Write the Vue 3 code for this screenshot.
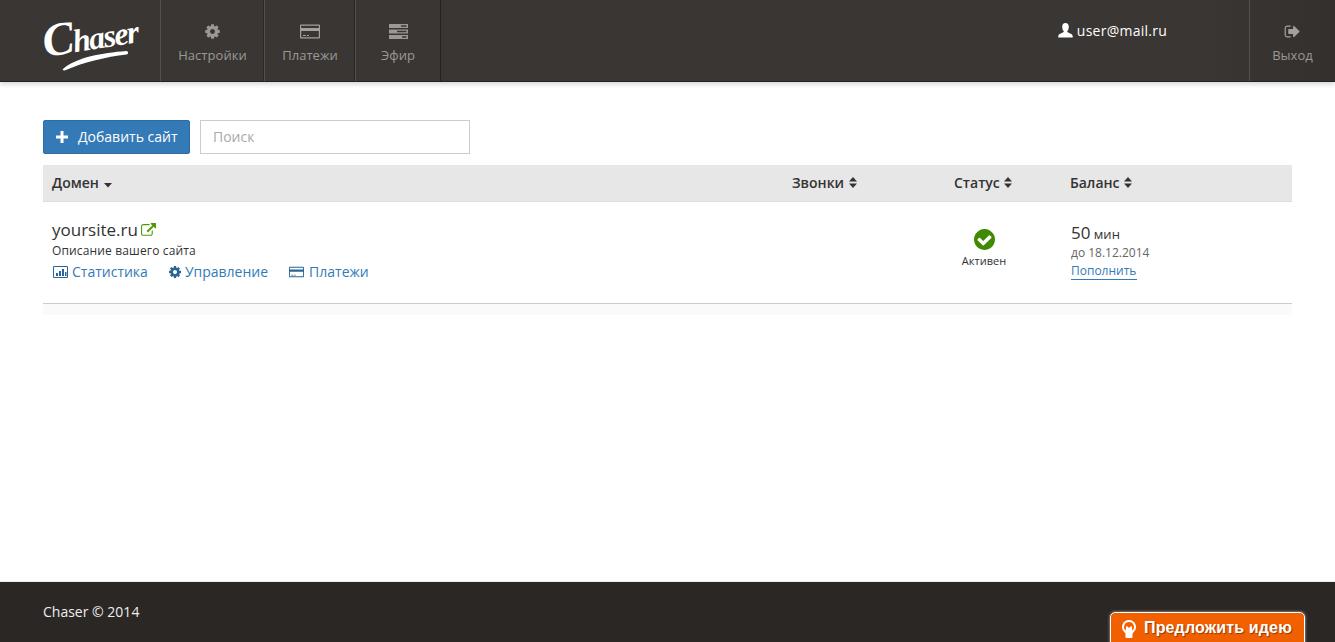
<script setup>
const gear = "M1152 896q0-106-75-181t-181-75-181 75-75 181 75 181 181 75 181-75 75-181zm512-109v222q0 12-8 23t-20 13l-185 28q-19 54-39 91 35 50 107 138 10 12 10 25t-9 23q-27 37-99 108t-94 71q-12 0-26-9l-138-108q-44 23-91 38-16 136-29 186-7 28-36 28h-222q-14 0-24.500-8.500t-11.500-21.500l-28-184q-49-16-90-37l-141 107q-10 9-25 9-14 0-25-11-126-114-165-168-7-10-7-23 0-12 8-23 15-21 51-66.500t54-70.500q-27-50-41-99l-183-27q-13-2-21-12.500t-8-23.500v-222q0-12 8-23t19-13l186-28q14-46 39-92-40-57-107-138-10-12-10-24 0-10 9-23 26-36 98.500-107.500t94.500-71.500q13 0 26 10l138 107q44-23 91-38 16-136 29-186 7-28 36-28h222q14 0 24.500 8.500t11.500 21.500l28 184q49 16 90 37l142-107q9-9 24-9 13 0 25 10 129 119 165 170 7 8 7 22 0 12-8 23-15 21-51 66.500t-54 70.500q26 50 41 98l183 28q13 2 21 12.500t8 23.500z"
const check = "M1412 734q0-28-18-46l-91-90q-19-19-45-19t-45 19l-408 407-226-226q-19-19-45-19t-45 19l-91 90q-18 18-18 46 0 27 18 45l362 362q19 19 45 19 27 0 46-19l543-543q18-18 18-45zm252 162q0 209-103 385.500t-279.500 279.500-385.500 103-385.500-103-279.500-279.500-103-385.500 103-385.500 279.500-279.500 385.500-103 385.500 103 279.500 279.500 103 385.500z"
const signout = "M704 1440q0 4 1 20t.5 26.500-3 23.500-10 19.500-20.500 6.500h-320q-119 0-203.500-84.500t-84.500-203.500v-704q0-119 84.500-203.500t203.500-84.500h320q13 0 22.500 9.500t9.500 22.500q0 4 1 20t.5 26.500-3 23.500-10 19.500-20.500 6.500h-320q-66 0-113 47t-47 113v704q0 66 47 113t113 47h312l11.500 1 11.500 3 8 5.500 7 9 2 13.500zm928-544q0 26-19 45l-544 544q-19 19-45 19t-45-19-19-45v-288h-448q-26 0-45-19t-19-45v-384q0-26 19-45t45-19h448v-288q0-26 19-45t45-19 45 19l544 544q19 19 19 45z"
const external = "M1408 928v320q0 119-84.500 203.500t-203.500 84.500h-832q-119 0-203.500-84.500t-84.500-203.500v-832q0-119 84.500-203.500t203.500-84.500h704q14 0 23 9t9 23v64q0 14-9 23t-23 9h-704q-66 0-113 47t-47 113v832q0 66 47 113t113 47h832q66 0 113-47t47-113v-320q0-14 9-23t23-9h64q14 0 23 9t9 23zm384-864v512q0 26-19 45t-45 19-45-19l-176-176-652 652q-10 10-23 10t-23-10l-114-114q-10-10-10-23t10-23l652-652-176-176q-19-19-19-45t19-45 45-19h512q26 0 45 19t19 45z"
const card = "M1 1h18a1 1 0 0 1 1 1v12a1 1 0 0 1-1 1H1a1 1 0 0 1-1-1V2a1 1 0 0 1 1-1zm.2 1.200v2.300h17.600V2.200zm0 5.300v6.300h17.600V7.500zM3 11.500h3v1H3zm4 0h2v1H7z"
</script>

<template>
  <div class="page">
    <header class="top">
      <a class="logo">
        <svg class="logo-svg" width="110" height="60" viewBox="0 0 110 60">
          <text class="logo-text" transform="translate(3 42) rotate(-9)"><tspan class="logo-cap">C</tspan>haser</text>
          <path d="M21 54C35 42 60 38 84 36c2.500-.2 3 3 .5 3.500C64 42 42 47 24 55c-2 1-4 0-3-1z" fill="#fff" />
        </svg>
      </a>
      <nav class="nav">
        <a class="nav-item w-settings">
          <svg class="nav-ic" width="17" height="17" viewBox="0 0 1792 1792"><path :d="gear" fill="#9b9896" fill-rule="evenodd" /></svg>
          <span>Настройки</span>
        </a>
        <a class="nav-item w-pay">
          <svg class="nav-ic" width="20" height="16" viewBox="0 0 20 16"><path :d="card" fill="#a3a09e" fill-rule="evenodd" /></svg>
          <span>Платежи</span>
        </a>
        <a class="nav-item w-air">
          <svg class="nav-ic" width="19" height="15" viewBox="0 0 19 15">
            <path d="M0 0h19v4H0zM0 5.500h19v4H0zM0 11h19v4H0z" fill="#9b9896" />
            <path d="M12 1.200h5.500v1.600H12zM8 6.700h9.500v1.600H8zM13 12.200h4.500v1.600H13z" fill="#3a3633" />
          </svg>
          <span>Эфир</span>
        </a>
      </nav>
      <div class="user">
        <svg width="15" height="15" viewBox="0 0 15 15"><path d="M7.500 0C5.300 0 4.200 1.700 4.200 3.900c0 1.500.5 3 1.400 4 .3.400.2 1.100-.3 1.400C3.700 10.300.7 10.800.3 13c-.1.900 0 1.600 0 1.600h14.400s.1-.7 0-1.600c-.4-2.200-3.400-2.700-5-3.700-.5-.3-.6-1-.3-1.400.9-1 1.400-2.500 1.400-4C10.800 1.700 9.700 0 7.500 0z" fill="#fff" /></svg>
        <span>user@mail.ru</span>
      </div>
      <a class="nav-item w-exit">
        <svg class="nav-ic" width="17" height="17" viewBox="0 0 1792 1792"><path :d="signout" fill="#a3a09e" /></svg>
        <span>Выход</span>
      </a>
    </header>

    <main class="main">
      <div class="tools">
        <button class="add-btn">
          <svg width="12" height="12" viewBox="0 0 12 12"><path d="M4.500 0h3v4.500H12v3H7.500V12h-3V7.500H0v-3h4.500z" fill="#fff" /></svg>
          <span>Добавить сайт</span>
        </button>
        <input class="search" placeholder="Поиск" />
      </div>

      <div class="table">
        <div class="row head">
          <div class="h-cell">Домен
            <svg width="8" height="5" viewBox="0 0 8 5"><path d="M0 0h8L4 4.500z" fill="#333" /></svg>
          </div>
          <div class="h-cell">Звонки
            <svg width="8" height="11" viewBox="0 0 8 11"><path d="M0 4.500h8L4 0zM0 6.500h8L4 11z" fill="#333" /></svg>
          </div>
          <div class="h-cell">Статус
            <svg width="8" height="11" viewBox="0 0 8 11"><path d="M0 4.500h8L4 0zM0 6.500h8L4 11z" fill="#333" /></svg>
          </div>
          <div class="h-cell">Баланс
            <svg width="8" height="11" viewBox="0 0 8 11"><path d="M0 4.500h8L4 0zM0 6.500h8L4 11z" fill="#333" /></svg>
          </div>
        </div>

        <div class="row body">
          <div class="domain">
            <div class="site">
              <span>yoursite.ru</span>
              <svg width="15" height="15" viewBox="0 0 1792 1792"><path :d="external" fill="#4f9a00" /></svg>
            </div>
            <div class="desc">Описание вашего сайта</div>
            <div class="links">
              <a class="link">
                <svg width="15" height="12" viewBox="0 0 15 12">
                  <path d="M.5.500h14v11H.5z" fill="none" stroke="#2a6496" />
                  <path d="M3 7h2v3H3zM6 5h2v5H6zM9 3h2v7H9zM12 6h1.500v4H12z" fill="#2a6496" />
                </svg>
                <span>Статистика</span>
              </a>
              <a class="link">
                <svg width="14" height="14" viewBox="0 0 1792 1792"><path :d="gear" fill="#2a6496" fill-rule="evenodd" /></svg>
                <span class="tight">Управление</span>
              </a>
              <a class="link link-pay">
                <svg width="15" height="12" viewBox="0 0 20 16"><path :d="card" fill="#2a6496" fill-rule="evenodd" /></svg>
                <span>Платежи</span>
              </a>
            </div>
          </div>
          <div></div>
          <div class="status">
            <svg width="21" height="21" viewBox="128 128 1536 1536"><path :d="check" fill="#3f8a00" /></svg>
            <span>Активен</span>
          </div>
          <div class="balance">
            <div class="mins"><b>50</b> мин</div>
            <div class="until">до 18.12.2014</div>
            <a class="refill">Пополнить</a>
          </div>
        </div>
        <div class="strip"></div>
      </div>
    </main>

    <footer class="foot">
      <span class="copy">Chaser © 2014</span>
      <a class="idea">
        <svg width="16" height="20" viewBox="0 0 16 20">
          <path d="M8 1a7 7 0 0 0-4.500 12.300c.7.600 1 1.200 1 2V18c0 .6.500 1 1 1h5c.5 0 1-.4 1-1v-2.700c0-.8.300-1.400 1-2A7 7 0 0 0 8 1z" fill="#fff" />
          <path d="M8 3a5 5 0 0 0-3.300 8.700C5 9 5 7 6 7l2 2 2-2c1 0 1 2 1.300 4.700A5 5 0 0 0 8 3z" fill="#f26000" />
        </svg>
        <span>Предложить идею</span>
      </a>
    </footer>
  </div>
</template>

<style scoped>
.page {
  width: 1335px;
  height: 642px;
  display: flex;
  flex-direction: column;
  font-family: "Open Sans", "Noto Sans", sans-serif;
  background: #fff;
  overflow: hidden;
  color: #333;
}
.top {
  height: 82px;
  flex: none;
  box-sizing: border-box;
  display: flex;
  background: linear-gradient(90deg, #3a3633 0, #3a3633 90%, #34302d 100%);
  border-bottom: 1px solid #26221f;
  box-shadow: 0 2px 5px rgba(0, 0, 0, 0.18);
  position: relative;
}
.logo {
  width: 160px;
  flex: none;
  box-sizing: border-box;
  padding: 15px 0 0 42px;
}
.logo-svg {
  display: block;
  overflow: visible;
}
.logo-text {
  font-family: "Liberation Serif", serif;
  font-weight: 700;
  font-style: italic;
  font-size: 32px;
  letter-spacing: -1.5px;
  fill: #fff;
}
.logo-cap {
  font-size: 47px;
}
.nav {
  display: flex;
}
.nav-item {
  box-sizing: border-box;
  display: flex;
  flex-direction: column;
  align-items: center;
  border-left: 1px solid #55514e;
  padding-top: 23px;
  font-size: 13px;
  letter-spacing: 0.05px;
  line-height: 18px;
  color: #9b9896;
}
.nav-ic {
  height: 17px;
  margin-bottom: 6px;
}
.w-settings { width: 104px; }
.w-pay { width: 91px; box-shadow: -1px 0 0 #2a2724; }
.w-air { width: 86px; box-shadow: -1px 0 0 #2a2724; border-right: 1px solid #26221f; }
.w-exit { width: 86px; flex: none; }
.user {
  margin-left: auto;
  margin-right: 82px;
  padding-top: 22px;
  display: flex;
  align-items: flex-start;
  gap: 4px;
  color: #fff;
  font-size: 14px;
  letter-spacing: 0.25px;
  line-height: 18px;
}
.user svg {
  margin-top: 1px;
}
.main {
  flex: 1;
  padding: 38px 43px 0;
}
.tools {
  display: flex;
  gap: 10px;
  height: 34px;
}
.add-btn {
  width: 147px;
  box-sizing: border-box;
  background: #337ab7;
  border: 1px solid #2e6da4;
  border-radius: 2px;
  color: #fff;
  display: flex;
  align-items: center;
  gap: 10px;
  padding: 0 0 2px 12px;
  font: 14px "Open Sans", sans-serif;
}
.add-btn svg {
  margin-top: 2px;
}
.search {
  width: 270px;
  box-sizing: border-box;
  border: 1px solid #ccc;
  outline: 0;
  padding: 0 12px 2px;
  font: 14px "Open Sans", sans-serif;
}
.search::placeholder {
  color: #aaa;
}
.table {
  margin-top: 11px;
  width: 1249px;
}
.row {
  display: grid;
  grid-template-columns: 740px 162px 116px 231px;
}
.head {
  height: 37px;
  box-sizing: border-box;
  background: #e7e7e7;
  border-bottom: 1px solid #ddd;
}
.h-cell {
  padding-left: 9px;
  font-size: 14px;
  font-weight: 600;
  line-height: 36px;
  color: #333;
}
.h-cell svg {
  margin-left: 1px;
}
.body {
  height: 102px;
  box-sizing: border-box;
  border-bottom: 1px solid #ccc;
}
.domain {
  padding: 16px 0 0 9px;
}
.site {
  display: flex;
  align-items: center;
  gap: 3px;
  font-size: 17px;
  line-height: 24px;
}
.desc {
  font-size: 12px;
  letter-spacing: 0.15px;
  line-height: 16px;
  margin-top: 1px;
}
.links {
  display: flex;
  gap: 20px;
  margin-top: 3px;
  padding-left: 1px;
}
.link {
  display: flex;
  align-items: center;
  gap: 4px;
  color: #337ab7;
  font-size: 14px;
  line-height: 20px;
}
.tight {
  margin-left: -1px;
}
.link-pay {
  margin-left: 1px;
  gap: 5px;
}
.status {
  width: 78px;
  padding-top: 27px;
  display: flex;
  flex-direction: column;
  align-items: center;
  font-size: 11px;
  line-height: 16px;
  gap: 3px;
}
.balance {
  padding: 19px 0 0 10px;
}
.mins {
  font-size: 13px;
  line-height: 24px;
}
.mins b {
  font-weight: 400;
  font-size: 17px;
}
.until {
  font-size: 12px;
  line-height: 16px;
  color: #666;
  margin-top: -1px;
}
.refill {
  display: block;
  width: 66px;
  margin-top: 2px;
  font-size: 12px;
  line-height: 16px;
  color: #337ab7;
  border-bottom: 1px solid #337ab7;
}
.strip {
  height: 11px;
  background: #fafafa;
}
.foot {
  height: 61px;
  flex: none;
  box-sizing: border-box;
  background: #2b2724;
  border-top: 1px solid #eee;
  display: flex;
  justify-content: space-between;
  padding: 20px 30px 0 43px;
  color: #eee;
  font-size: 14px;
  line-height: 20px;
}
.idea {
  width: 195px;
  height: 36px;
  margin-top: 10px;
  box-sizing: border-box;
  background: linear-gradient(#f26000, #f06000);
  border: 1px solid #fff;
  border-radius: 5px;
  box-shadow: 0 0 3px rgba(255, 255, 255, 0.7);
  color: #fff;
  font: 700 16px "Liberation Sans", Arial, sans-serif;
  letter-spacing: 0.15px;
  text-shadow: 1px 1px 1px rgba(0, 0, 0, 0.4);
  display: flex;
  align-items: flex-start;
  gap: 7px;
  padding: 6px 0 0 10px;
}
</style>
<style>
html, body { margin: 0; overflow: hidden; }
</style>
